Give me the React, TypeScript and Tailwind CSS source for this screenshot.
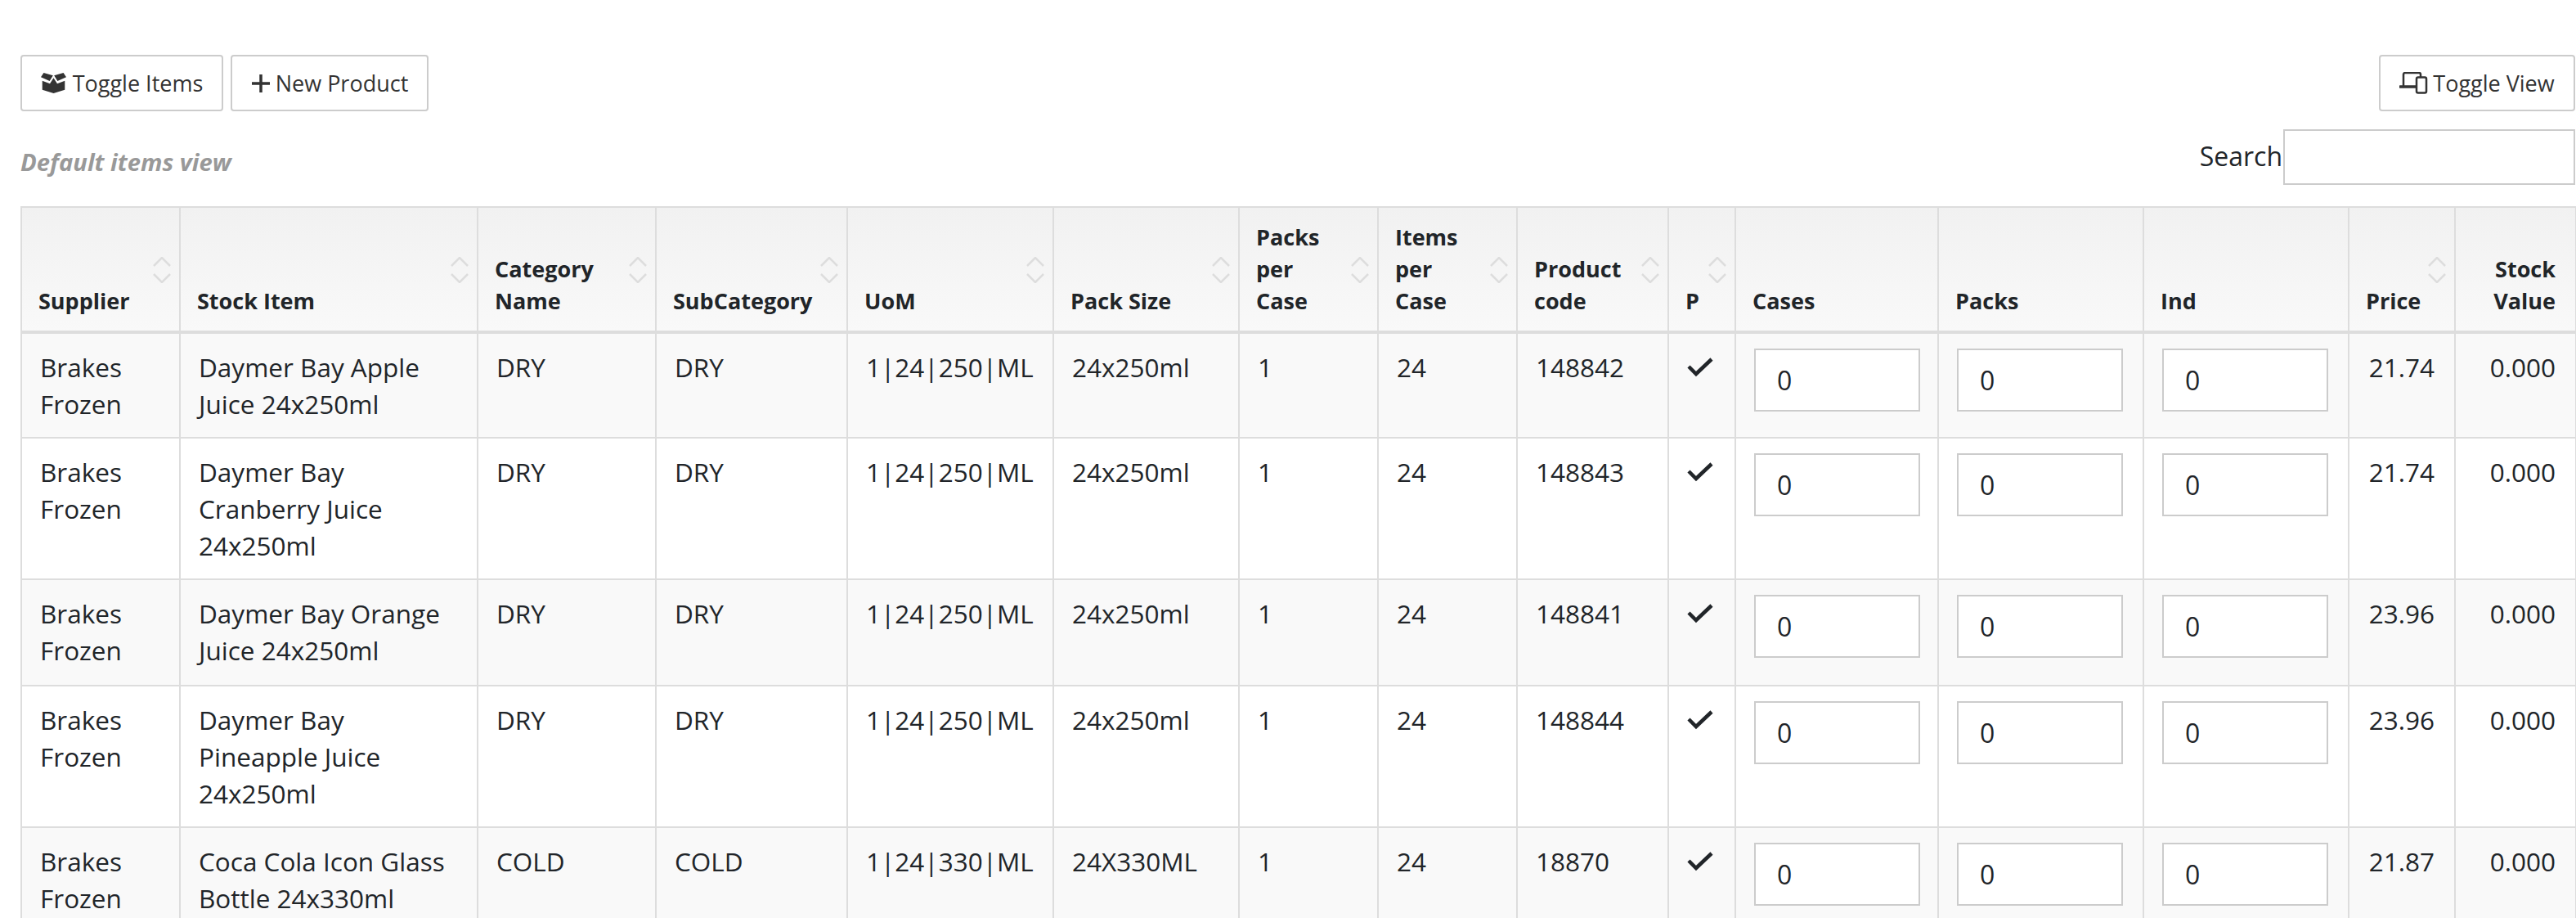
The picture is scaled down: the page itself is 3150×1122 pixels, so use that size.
interface Product {
  item: string[];
  category: string;
  uom: string;
  pack: string;
  code: string;
  price: string;
  height: string;
}

const products: Product[] = [
  { item: ['Daymer Bay Apple', 'Juice 24x250ml'], category: 'DRY', uom: '1|24|250|ML', pack: '24x250ml', code: '148842', price: '21.74', height: 'h-[127px]' },
  { item: ['Daymer Bay', 'Cranberry Juice', '24x250ml'], category: 'DRY', uom: '1|24|250|ML', pack: '24x250ml', code: '148843', price: '21.74', height: 'h-[172px]' },
  { item: ['Daymer Bay Orange', 'Juice 24x250ml'], category: 'DRY', uom: '1|24|250|ML', pack: '24x250ml', code: '148841', price: '23.96', height: 'h-[130px]' },
  { item: ['Daymer Bay', 'Pineapple Juice', '24x250ml'], category: 'DRY', uom: '1|24|250|ML', pack: '24x250ml', code: '148844', price: '23.96', height: 'h-[172px]' },
  { item: ['Coca Cola Icon Glass', 'Bottle 24x330ml'], category: 'COLD', uom: '1|24|330|ML', pack: '24X330ML', code: '18870', price: '21.87', height: 'h-[127px]' },
];

const headers = [
  { label: ['Supplier'], width: 'w-[194px]', sort: true },
  { label: ['Stock Item'], width: 'w-[364px]', sort: true },
  { label: ['Category', 'Name'], width: 'w-[218px]', sort: true },
  { label: ['SubCategory'], width: 'w-[234px]', sort: true },
  { label: ['UoM'], width: 'w-[252px]', sort: true },
  { label: ['Pack Size'], width: 'w-[227px]', sort: true },
  { label: ['Packs', 'per', 'Case'], width: 'w-[170px]', sort: true },
  { label: ['Items', 'per', 'Case'], width: 'w-[170px]', sort: true },
  { label: ['Product', 'code'], width: 'w-[185px]', sort: true },
  { label: ['P'], width: 'w-[82px]', sort: true },
  { label: ['Cases'], width: 'w-[248px]', sort: false },
  { label: ['Packs'], width: 'w-[251px]', sort: false },
  { label: ['Ind'], width: 'w-[251px]', sort: false },
  { label: ['Price'], width: 'w-[130px]', sort: true },
  { label: ['Stock', 'Value'], width: 'w-[148px]', sort: false, right: true },
];

function SortIcon() {
  return (
    <svg className="absolute right-[10px] top-[60px]" width="22" height="32" viewBox="0 0 22 32" fill="none" stroke="#ddd" strokeWidth="2.5">
      <path d="M1 11 11 1l10 10M1 21l10 10 10-10" />
    </svg>
  );
}

function BoxIcon() {
  return (
    <svg width="31" height="25" viewBox="0 0 90 72" fill="#333">
      <path d="M0 15 10 0l33 9-12 20zM90 15 80 0 47 9l12 20z" />
      <path d="M5 28l27 10 13-20 13 20 27-10v32L45 72 5 60z" />
    </svg>
  );
}

function Lines({ lines }: { lines: string[] }) {
  return (
    <>
      {lines.map(line => (
        <div key={line}>{line}</div>
      ))}
    </>
  );
}

function QtyInput() {
  return (
    <input
      type="text"
      defaultValue="0"
      className="block h-[77px] w-[203px] border-2 border-[#ccc] bg-white px-[26px] text-[32px] text-[#212529] outline-none"
    />
  );
}

export default function App() {
  const cell = 'border-2 border-[#ddd] py-[18px] pl-[22px] pr-[24px] align-top';
  const button = 'flex h-[69px] items-center justify-center rounded-[4px] border-2 border-[#ccc] text-[27px] text-[#333]';
  return (
    <div className="h-[1122px] w-[3150px] overflow-hidden bg-white font-['Open_Sans',sans-serif] text-[31.5px] leading-[45px] text-[#212529]">
      <div className="flex items-start justify-between pl-[25px] pr-px pt-[67px]">
        <div className="flex gap-[9px]">
          <button className={`${button} w-[248px] gap-[8px]`}>
            <BoxIcon />
            Toggle Items
          </button>
          <button className={`${button} w-[242px] gap-[6px]`}>
            <svg width="24" height="24" viewBox="0 0 24 24" stroke="#333" strokeWidth="3.5">
              <path d="M12 1v22M1 12h22" />
            </svg>
            New Product
          </button>
        </div>
        <button className={`${button} w-[240px] gap-[6px]`}>
          <svg width="35" height="27" viewBox="0 0 35 27" fill="none" stroke="#333" strokeWidth="2.5" strokeLinecap="round">
            <path d="M5 18V3a2 2 0 0 1 2-2h17a2 2 0 0 1 2 2v3" />
            <path d="M1 18h19" strokeWidth="3.5" />
            <rect x="21" y="6.5" width="12" height="19" rx="2" />
          </svg>
          Toggle View
        </button>
      </div>

      <div className="flex items-center justify-between pl-[25px] pr-px pt-[22px]">
        <div className="mt-[13px] text-[29.2px] font-bold italic text-[#999]">Default items view</div>
        <label className="flex items-center gap-[1px] text-[32px]">
          <span className="mb-[4px]">Search</span>
          <input type="text" className="h-[68px] w-[357px] border-2 border-[#ccc] outline-none" />
        </label>
      </div>

      <div className="pl-[25px] pt-[26px]">
        <table className="w-[3124px] table-fixed border-collapse">
          <thead>
            <tr className="h-[153px] bg-gradient-to-b from-[#f1f1f1] to-[#f9f9f9]">
              {headers.map(h => (
                <th
                  key={h.label.join(' ') + h.width}
                  className={`relative border-2 border-b-[4px] border-[#ddd] pl-[20px] pr-[24px] pb-[17px] align-bottom text-[27px] leading-[39px] font-bold ${h.width} ${h.right ? 'text-right' : 'text-left'}`}
                >
                  <Lines lines={h.label} />
                  {h.sort && <SortIcon />}
                </th>
              ))}
            </tr>
          </thead>
          <tbody>
            {products.map((p, i) => (
              <tr key={p.code} className={`${p.height} ${i % 2 === 0 ? 'bg-[#f9f9f9]' : 'bg-white'}`}>
                <td className={cell}>
                  <Lines lines={['Brakes', 'Frozen']} />
                </td>
                <td className={cell}>
                  <Lines lines={p.item} />
                </td>
                <td className={cell}>{p.category}</td>
                <td className={cell}>{p.category}</td>
                <td className={cell}>{p.uom}</td>
                <td className={cell}>{p.pack}</td>
                <td className={cell}>1</td>
                <td className={cell}>24</td>
                <td className={cell}>{p.code}</td>
                <td className={cell}>
                  <svg className="mt-[11px]" width="32" height="24" viewBox="0 0 32 24" fill="none" stroke="#212529" strokeWidth="4.5">
                    <path d="m2 11 9 9L30 2" />
                  </svg>
                </td>
                <td className={cell}><QtyInput /></td>
                <td className={cell}><QtyInput /></td>
                <td className={cell}><QtyInput /></td>
                <td className={`${cell} text-right`}>{p.price}</td>
                <td className={`${cell} text-right`}>0.000</td>
              </tr>
            ))}
          </tbody>
        </table>
      </div>
    </div>
  );
}
